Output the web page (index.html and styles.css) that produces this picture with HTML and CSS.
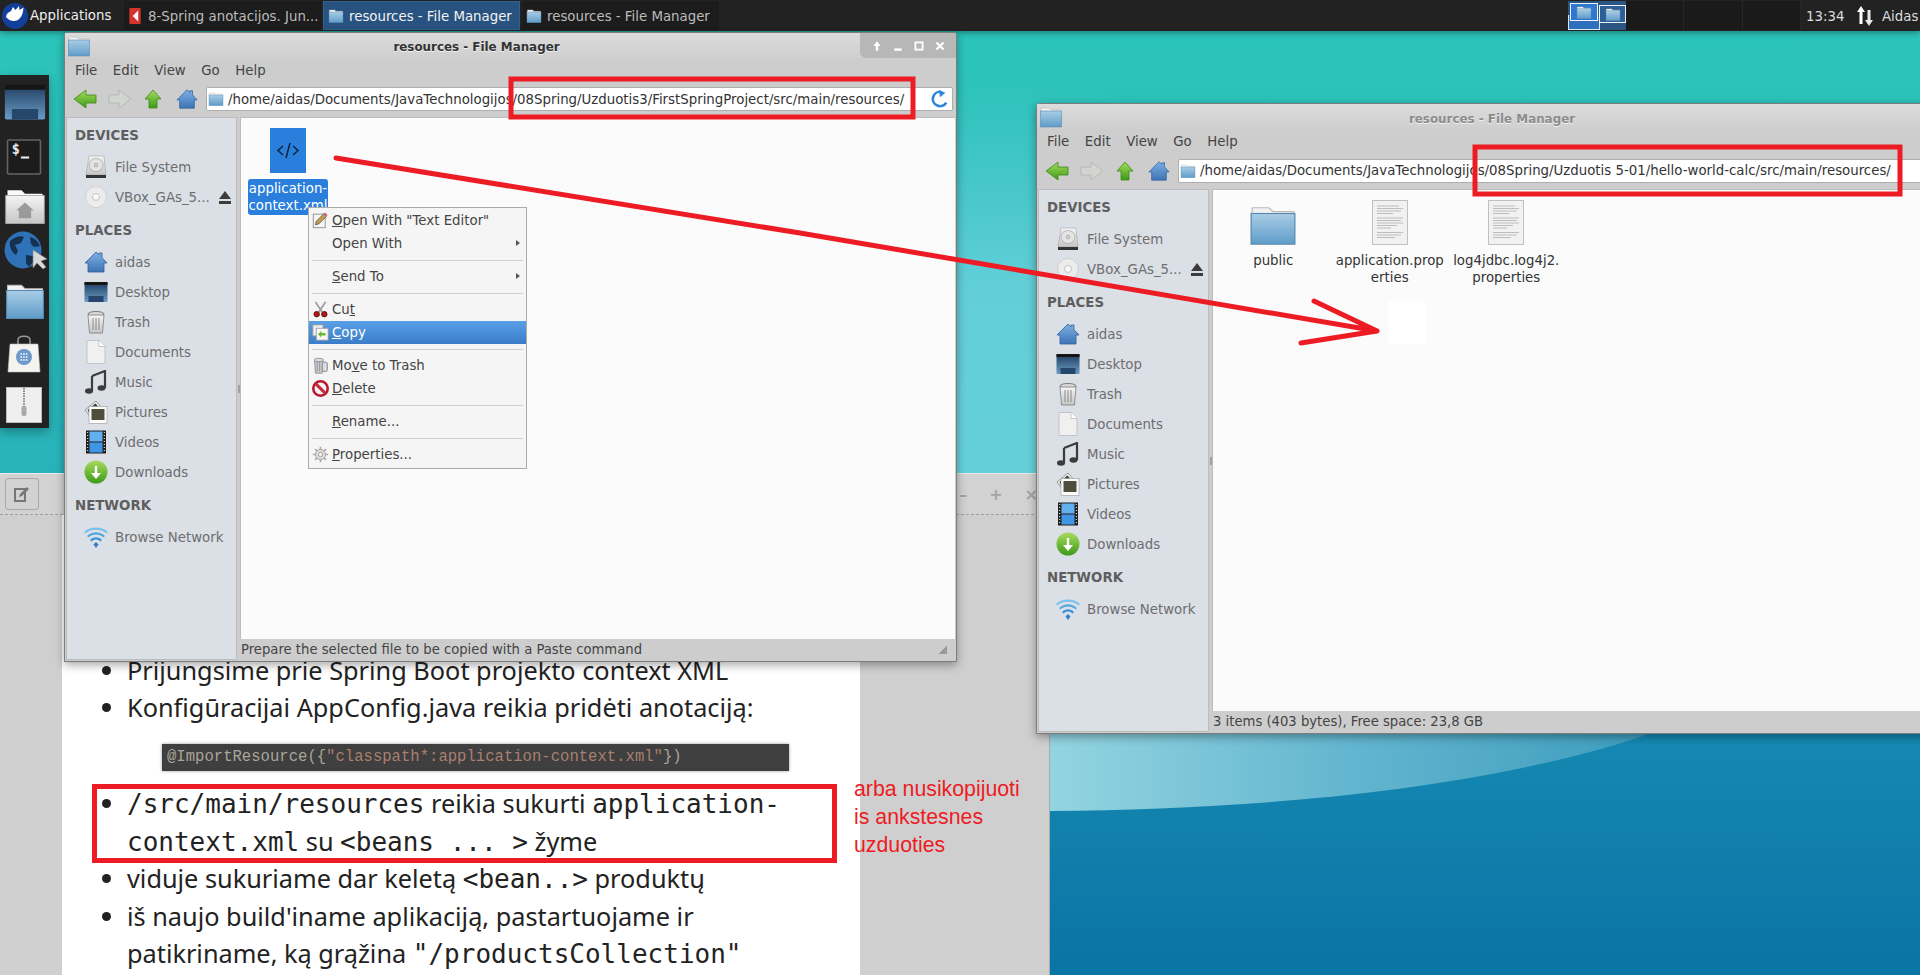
FILE: index.html
```html
<!DOCTYPE html>
<html lang="lt">
  <head>
    <meta charset="UTF-8" />
    <meta name="viewport" content="width=device-width, initial-scale=1.0" />
    <title>resources - File Manager</title>
    <link rel="stylesheet" href="styles.css">
  </head>
  <body>
    <!-- icon sprite -->
    <svg class="sprite" xmlns="http://www.w3.org/2000/svg">
      <defs>
        <linearGradient id="g-folder" x1="0" y1="0" x2="0" y2="1"><stop offset="0" stop-color="#a9cde6"/><stop offset="1" stop-color="#5f9cc9"/></linearGradient>
        <linearGradient id="g-grey" x1="0" y1="0" x2="0" y2="1"><stop offset="0" stop-color="#f4f4f4"/><stop offset="1" stop-color="#c6c6c6"/></linearGradient>
        <linearGradient id="g-house" x1="0" y1="0" x2="0" y2="1"><stop offset="0" stop-color="#7fb0e4"/><stop offset="1" stop-color="#3d74b5"/></linearGradient>
        <linearGradient id="g-green" x1="0" y1="0" x2="0" y2="1"><stop offset="0" stop-color="#a6dc5c"/><stop offset="1" stop-color="#3e9a1a"/></linearGradient>
        <linearGradient id="g-screen" x1="0" y1="0" x2="0" y2="1"><stop offset="0" stop-color="#1f3c5e"/><stop offset="1" stop-color="#6b9cc6"/></linearGradient>
      </defs>
      <symbol id="i-folder" viewBox="0 0 24 24" preserveAspectRatio="none">
        <path d="M2 3h8l2 2h10v4H2z" fill="#f2f2f2" stroke="#bbb" stroke-width=".6"/>
        <rect x="1.500" y="6" width="21" height="16" fill="url(#g-folder)" stroke="#5a8ab0" stroke-width=".6"/>
      </symbol>
      <symbol id="i-home-folder" viewBox="0 0 24 24">
        <path d="M2 3h8l2 2h10v4H2z" fill="#fafafa"/>
        <rect x="1" y="6" width="22" height="16" fill="url(#g-grey)" stroke="#aaa" stroke-width=".5"/>
        <path d="M12 10l5 4.500h-1.500V19h-7v-4.500H7z" fill="#9a9a9a"/>
      </symbol>
      <symbol id="i-home" viewBox="0 0 24 24">
        <path d="M12 2l3 2.800V3h3v4.600L23 13h-3v9H4v-9H1z" fill="url(#g-house)" stroke="#2e5f9e" stroke-width=".8"/>
      </symbol>
      <symbol id="i-hdd" viewBox="0 0 24 24">
        <path d="M5 1h15l2 19H2z" fill="url(#g-grey)" stroke="#999" stroke-width=".5"/>
        <ellipse cx="12" cy="10" rx="7" ry="6.500" fill="#e4e4e4" stroke="#aaa" stroke-width=".8"/>
        <circle cx="12" cy="10" r="2" fill="#ccc" stroke="#999" stroke-width=".5"/>
        <rect x="2" y="20" width="20" height="3" fill="#333"/>
      </symbol>
      <symbol id="i-disc" viewBox="0 0 24 24">
        <circle cx="12" cy="12" r="10.500" fill="#ececec" stroke="#d0d0d0"/>
        <circle cx="12" cy="12" r="3.500" fill="#f8f8f8" stroke="#c4c4c4"/>
      </symbol>
      <symbol id="i-desktop" viewBox="0 0 24 24">
        <rect x="0.500" y="2" width="23" height="20" rx="1" fill="url(#g-screen)"/>
        <rect x="0.500" y="2" width="23" height="3" fill="#151515"/>
        <rect x="4.500" y="16" width="15" height="6" fill="#24476b"/>
      </symbol>
      <symbol id="i-trash" viewBox="0 0 24 24">
        <ellipse cx="12" cy="4" rx="8" ry="2.500" fill="#d8d8d8" stroke="#7c7c7c"/>
        <path d="M4 5l1.500 18h13L20 5z" fill="url(#g-grey)" stroke="#7c7c7c" stroke-width=".8"/>
        <path d="M9 8v12M12 8v12M15 8v12" stroke="#8a8a8a" stroke-width="1"/>
      </symbol>
      <symbol id="i-doc" viewBox="0 0 24 24">
        <path d="M3 0.500h12l6 6V23.500H3z" fill="#f0f0f0" stroke="#b4b4b4" stroke-width=".7"/>
        <path d="M15 0.500v6h6" fill="#fff" stroke="#b4b4b4" stroke-width=".7"/>
      </symbol>
      <symbol id="i-music" viewBox="0 0 24 24">
        <path d="M8 6l13-5v17" fill="none" stroke="#3c3c3c" stroke-width="2.200"/>
        <path d="M8 6v15" stroke="#3c3c3c" stroke-width="2.200"/>
        <ellipse cx="5" cy="21" rx="4" ry="2.800" fill="#3c3c3c"/>
        <ellipse cx="17.500" cy="18" rx="4" ry="2.800" fill="#3c3c3c"/>
      </symbol>
      <symbol id="i-pictures" viewBox="0 0 24 24">
        <path d="M1 10l11-9 6 7-10 11z" fill="#eee" stroke="#777" stroke-width=".7"/>
        <path d="M3.500 10l8-6.500 3 3.500-8 9z" fill="#3c3c36"/>
        <rect x="5" y="6.500" width="18" height="17" fill="#fafafa" stroke="#999" stroke-width=".6"/>
        <rect x="7.500" y="9" width="13" height="11" fill="#4d4f3c"/>
      </symbol>
      <symbol id="i-video" viewBox="0 0 24 24">
        <rect x="2" y="0.500" width="20" height="23" fill="#222"/>
        <rect x="5.500" y="1.500" width="13" height="10" fill="#63b0f0"/>
        <rect x="5.500" y="12.500" width="13" height="10" fill="#3f96e6"/>
        <path d="M3.700 2v20M20.300 2v20" stroke="#fff" stroke-width="1" stroke-dasharray="1 2"/>
      </symbol>
      <symbol id="i-download" viewBox="0 0 24 24">
        <circle cx="12" cy="12" r="11.500" fill="url(#g-green)"/>
        <path d="M10.800 6h2.400v7H17l-5 6-5-6h3.800z" fill="#fff"/>
      </symbol>
      <symbol id="i-wifi" viewBox="0 0 24 24">
        <g fill="none" stroke-linecap="round" stroke-width="2.200">
          <path d="M1.500 7C7 2.500 17 2.500 22.500 7" stroke="#7cc0ee"/>
          <path d="M4.500 11c4.500-3.500 10.500-3.500 15 0" stroke="#4fa6e4"/>
          <path d="M7.500 15c3-2.200 6-2.200 9 0" stroke="#3a90d8"/>
        </g>
        <path d="M12 17l2.500 2.500L12 23l-2.500-3.500z" fill="#2f7fc9"/>
      </symbol>
      <symbol id="i-back" viewBox="0 0 24 20">
        <path d="M1 10L13 1v5h10v8H13v5z" fill="url(#g-green)" stroke="#3b8a16" stroke-width=".8"/>
      </symbol>
      <symbol id="i-forward" viewBox="0 0 24 20">
        <path d="M23 10L11 1v5H1v8h10v5z" fill="#d2d4d0" stroke="#b0b2ae" stroke-width=".8"/>
      </symbol>
      <symbol id="i-up" viewBox="0 0 20 20">
        <path d="M10 1l8 9h-4v9H6v-9H2z" fill="url(#g-green)" stroke="#3b8a16" stroke-width=".8"/>
      </symbol>
      <symbol id="i-reload" viewBox="0 0 20 20">
        <path d="M11 2a8 8 0 1 0 6 12" fill="none" stroke="#2f86d8" stroke-width="3"/>
        <path d="M9 0l7 3-6 5z" fill="#2f86d8"/>
      </symbol>
      <symbol id="i-text" viewBox="0 0 36 45">
        <rect x=".5" y=".5" width="35" height="44" fill="#f1f1f1" stroke="#c0c0c0"/>
        <path d="M5 6h22M5 8.500h26M5 11h24M5 13.500h16M5 18h26M5 20.500h24M5 23h26M5 25.500h20M5 28h14M5 32.500h26M5 35h24M5 37.500h18" stroke="#bdbdbd" stroke-width="1"/>
      </symbol>
      <symbol id="i-pencil" viewBox="0 0 20 20">
        <rect x="1.500" y="2.500" width="14" height="16" fill="#f7f7f7" stroke="#888"/>
        <path d="M4 15l1-4 9-9 3 3-9 9z" fill="#c9a04a" stroke="#3c3c3c" stroke-width=".8"/>
        <path d="M14 2l3 3 1.500-1.500-3-3z" fill="#d9679a"/>
      </symbol>
      <symbol id="i-cut" viewBox="0 0 20 20">
        <path d="M4 1l8 12M16 1L8 13" stroke="#9a9a9a" stroke-width="2"/>
        <circle cx="5.500" cy="15.500" r="3.200" fill="#b01818" stroke="#5a0c0c"/>
        <circle cx="14.500" cy="15.500" r="3.200" fill="#b01818" stroke="#5a0c0c"/>
      </symbol>
      <symbol id="i-copy" viewBox="0 0 20 20">
        <rect x="1" y="1" width="12" height="13" fill="#eee" stroke="#999"/>
        <rect x="5" y="5" width="14" height="14" fill="#f8f8f8" stroke="#999"/>
        <path d="M7 12l4-4v2.500h5v3h-5V16z" fill="#6cb83a"/>
      </symbol>
      <symbol id="i-move-trash" viewBox="0 0 20 20">
        <path d="M3 4h10l-1 15H4z" fill="#c8ced6" stroke="#777" stroke-width=".8"/>
        <path d="M6 6v11M9 6v11" stroke="#888"/>
        <rect x="12" y="6" width="6" height="11" rx="2" fill="#d8dde2" stroke="#777"/>
        <ellipse cx="8" cy="3.500" rx="5.500" ry="2" fill="#ddd" stroke="#777" stroke-width=".8"/>
      </symbol>
      <symbol id="i-delete" viewBox="0 0 20 20">
        <circle cx="10" cy="10" r="8.500" fill="#f4f4f4" stroke="#b8182c" stroke-width="3"/>
        <path d="M4.500 4.500l11 11" stroke="#c8283c" stroke-width="3.500"/>
      </symbol>
      <symbol id="i-gear" viewBox="0 0 20 20">
        <circle cx="10" cy="10" r="6" fill="#dcdcdc" stroke="#999"/>
        <circle cx="10" cy="10" r="2.500" fill="#f4f4f4" stroke="#999"/>
        <path d="M10 1v3M10 16v3M1 10h3M16 10h3M3.600 3.600l2.100 2.100M14.300 14.300l2.100 2.100M3.600 16.400l2.100-2.100M14.300 5.700l2.100-2.100" stroke="#aaa" stroke-width="2"/>
      </symbol>
      <symbol id="i-eject" viewBox="0 0 12 13">
        <path d="M6 0l6 8H0z" fill="#3c3c3c"/>
        <rect y="10" width="12" height="3" fill="#3c3c3c"/>
      </symbol>
    </svg>

    <!-- wallpaper -->
    <svg class="wallpaper" viewBox="0 0 1920 975">
      <defs>
        <linearGradient id="wall-teal" x1="0" y1="0" x2="0" y2="1"><stop offset="0" stop-color="#2cc6bb"/><stop offset="1" stop-color="#27afb9"/></linearGradient>
        <linearGradient id="wall-blue" x1="0" y1="0" x2="0" y2="1"><stop offset="0" stop-color="#1d97ba"/><stop offset="1" stop-color="#0a74a5"/></linearGradient>
        <linearGradient id="wall-wave" gradientUnits="userSpaceOnUse" x1="1050" y1="0" x2="1660" y2="0"><stop offset="0" stop-color="#93d4e0"/><stop offset="0.5" stop-color="#62b5cf"/><stop offset="1" stop-color="#3c9cbd"/></linearGradient>
        <radialGradient id="wall-glow" gradientUnits="userSpaceOnUse" cx="1000" cy="540" r="460"><stop offset="0" stop-color="#66d0da"/><stop offset="0.55" stop-color="#62cfd8"/><stop offset="1" stop-color="#62cfd8" stop-opacity="0"/></radialGradient>
      </defs>
      <rect width="1920" height="560" fill="url(#wall-teal)"/>
      <rect width="1920" height="560" fill="url(#wall-glow)"/>
      <rect y="560" width="1920" height="415" fill="url(#wall-blue)"/>
      <path d="M900 560H1920C1800 620 1700 715 1640 737C1480 790 1250 810 1050 811H900z" fill="url(#wall-wave)"/>
    </svg>

    <!-- top panel -->
    <header class="panel">
      <div class="panel-menu">
        <svg class="logo" viewBox="0 0 26 26">
          <circle cx="13" cy="13" r="13" fill="#123f9a"/>
          <path d="M4 14C4 11 7 9 9 8L11 4l2.500 3L17 3l.5 4 4-2.500C21 10 20 14 16 17c-4 2-9 1-12-3z" fill="#fff"/>
        </svg>
        Applications
      </div>
      <div class="task task-pdf">
        <svg class="task-icon" viewBox="0 0 16 20"><rect x="1" width="14" height="20" fill="#d8342e"/><path d="M12 3L5 10l7 7z" fill="#f4f4f4"/></svg>
        <span>8-Spring anotacijos. Jun...</span>
      </div>
      <div class="task task-active">
        <svg class="task-icon"><use href="#i-folder"/></svg>
        <span>resources - File Manager</span>
      </div>
      <div class="task">
        <svg class="task-icon"><use href="#i-folder"/></svg>
        <span>resources - File Manager</span>
      </div>
      <div class="panel-fill"></div>
      <div class="pager">
        <div class="workspace workspace-on">
          <div class="mini-base"></div>
          <div class="mini mini-one"><svg class="mini-icon"><use href="#i-folder"/></svg></div>
          <div class="mini mini-two"><svg class="mini-icon"><use href="#i-folder"/></svg></div>
        </div>
        <div class="workspace"></div>
        <div class="workspace"></div>
        <div class="workspace"></div>
      </div>
      <div class="clock">13:34</div>
      <svg class="net-icon" viewBox="0 0 20 22">
        <path d="M6 1l4 6H7.500v12h-3V7H2z" fill="#fff"/>
        <path d="M14 21l-4-6h2.500V5h3v10H18z" fill="#e8e8e8"/>
      </svg>
      <div class="user">Aidas</div>
    </header>

    <!-- dock -->
    <nav class="dock">
      <svg class="dock-icon dock-desktop"><use href="#i-desktop"/></svg>
      <svg class="dock-icon dock-term" viewBox="0 0 34 35">
        <rect x="1" y="1" width="32" height="33" rx="1" fill="#1c1c1c" stroke="#666" stroke-width="1.500"/>
        <text x="5" y="15" class="term-text">$</text>
        <rect x="14" y="17" width="8" height="2" fill="#eee"/>
      </svg>
      <svg class="dock-icon dock-home"><use href="#i-home-folder"/></svg>
      <svg class="dock-icon dock-globe" viewBox="0 0 44 40">
        <circle cx="19" cy="19" r="18.500" fill="#2f72b8"/>
        <path d="M6 10c5-4 10-6 14-4l-3 6-6 2 3 6-2 4c-4-2-7-8-6-14zM26 6c4 1 8 4 10 9l-6 1-3-3zM22 24l7 1 1 5-5 6-3-4z" fill="#16304f"/>
        <path d="M29 19l0 18 4-5 6 6 3-2-5-6 6-2z" fill="#d8d8d8" stroke="#888" stroke-width=".6"/>
      </svg>
      <svg class="dock-icon dock-folder"><use href="#i-folder"/></svg>
      <svg class="dock-icon dock-bag" viewBox="0 0 34 38">
        <path d="M11 10V5c0-5 12-5 12 0v5" fill="none" stroke="#999" stroke-width="1.500"/>
        <path d="M3 9h28l2 28H1z" fill="#f4f4f0" stroke="#bbb" stroke-width=".6"/>
        <circle cx="17" cy="22" r="8" fill="#6f99cc"/>
        <path d="M13.500 19h7M13.500 22h7M13.500 25h7" stroke="#fff" stroke-width="1.500" stroke-dasharray="1.500 1.200"/>
      </svg>
      <svg class="dock-icon dock-zip" viewBox="0 0 36 36">
        <rect x=".5" y=".5" width="35" height="35" fill="#efefef" stroke="#bbb"/>
        <path d="M18 1v19" stroke="#888" stroke-width="2" stroke-dasharray="1.500 1"/>
        <rect x="15.500" y="19" width="5" height="10" rx="2" fill="#aaa"/>
      </svg>
    </nav>

    <!-- slides app behind the file managers -->
    <section class="slides">
      <div class="slides-bar">
        <div class="edit-btn"><svg class="edit-icon" viewBox="0 0 20 20"><path d="M3 5h10v12H3z" fill="none" stroke="#777" stroke-width="2"/><path d="M7 13l1-3 7-7 2 2-7 7z" fill="#777"/></svg></div>
        <div class="win-marks"><span>–</span><span>+</span><span>×</span></div>
      </div>
      <div class="slides-body">
        <article class="page">
          <ul class="bullets">
            <li>Prijungsime prie Spring Boot projekto context XML</li>
            <li>Konfigūracijai AppConfig.java reikia pridėti anotaciją:</li>
          </ul>
          <div class="code"><span class="code-ann">@ImportResource</span>({<span class="code-str">"classpath*:application-context.xml"</span>})</div>
          <ul class="bullets">
            <li><code>/src/main/resources</code> reikia sukurti <code>application-context.xml</code> su <code>&lt;beans ... &gt;</code> žyme</li>
            <li>viduje sukuriame dar keletą <code>&lt;bean..&gt;</code> produktų</li>
            <li>iš naujo build'iname aplikaciją, pastartuojame ir patikriname, ką grąžina <code>"/productsCollection"</code></li>
          </ul>
        </article>
      </div>
    </section>

    <!-- left file manager -->
    <section class="window window-left">
      <div class="titlebar">
        <svg class="title-icon"><use href="#i-folder"/></svg>
        <div class="title">resources - File Manager</div>
        <div class="title-btns">
          <svg class="tb" viewBox="0 0 10 10"><path d="M5 1l3 4H6v4H4V5H2z" fill="#fff"/></svg>
          <svg class="tb" viewBox="0 0 10 10"><rect x="2" y="7" width="6" height="2" fill="#fff"/></svg>
          <svg class="tb" viewBox="0 0 10 10"><rect x="2" y="2" width="6" height="6" fill="none" stroke="#fff" stroke-width="1.500"/></svg>
          <svg class="tb" viewBox="0 0 10 10"><path d="M2 2l6 6M8 2l-6 6" stroke="#fff" stroke-width="1.800"/></svg>
        </div>
      </div>
      <div class="menubar"><span>File</span><span>Edit</span><span>View</span><span>Go</span><span>Help</span></div>
      <div class="toolbar">
        <svg class="tool tool-arrow"><use href="#i-back"/></svg>
        <svg class="tool tool-arrow"><use href="#i-forward"/></svg>
        <svg class="tool tool-up"><use href="#i-up"/></svg>
        <svg class="tool tool-house"><use href="#i-home"/></svg>
        <div class="location">
          <svg class="loc-icon"><use href="#i-folder"/></svg>
          <span class="loc-path">/home/aidas/Documents/JavaTechnologijos/08Spring/Uzduotis3/FirstSpringProject/src/main/resources/</span>
          <svg class="loc-reload"><use href="#i-reload"/></svg>
        </div>
      </div>
      <div class="panes">
        <aside class="sidebar">
          <h3>DEVICES</h3>
          <div class="side-row"><svg class="side-icon"><use href="#i-hdd"/></svg>File System</div>
          <div class="side-row"><svg class="side-icon"><use href="#i-disc"/></svg>VBox_GAs_5...<svg class="eject"><use href="#i-eject"/></svg></div>
          <h3>PLACES</h3>
          <div class="side-row"><svg class="side-icon"><use href="#i-home"/></svg>aidas</div>
          <div class="side-row"><svg class="side-icon"><use href="#i-desktop"/></svg>Desktop</div>
          <div class="side-row"><svg class="side-icon"><use href="#i-trash"/></svg>Trash</div>
          <div class="side-row"><svg class="side-icon"><use href="#i-doc"/></svg>Documents</div>
          <div class="side-row"><svg class="side-icon"><use href="#i-music"/></svg>Music</div>
          <div class="side-row"><svg class="side-icon"><use href="#i-pictures"/></svg>Pictures</div>
          <div class="side-row"><svg class="side-icon"><use href="#i-video"/></svg>Videos</div>
          <div class="side-row"><svg class="side-icon"><use href="#i-download"/></svg>Downloads</div>
          <h3>NETWORK</h3>
          <div class="side-row"><svg class="side-icon"><use href="#i-wifi"/></svg>Browse Network</div>
        </aside>
        <div class="splitter"><i></i></div>
        <div class="main-col">
          <div class="view">
            <div class="file file-xml">
              <svg class="file-icon" viewBox="0 0 36 45">
                <rect width="36" height="45" fill="#2a7fdc"/>
                <path d="M13 18l-5 4.500 5 4.500M23 18l5 4.500-5 4.500M20 15l-4 15" fill="none" stroke="#10233c" stroke-width="1.500"/>
              </svg>
              <div class="file-label selected">application-<br>context.xml</div>
            </div>
          </div>
          <div class="statusbar">Prepare the selected file to be copied with a Paste command<span class="grip"></span></div>
        </div>
      </div>
      <!-- context menu -->
      <div class="ctx">
        <div class="ctx-item"><svg class="ctx-icon"><use href="#i-pencil"/></svg><span><u>O</u>pen With "Text Editor"</span></div>
        <div class="ctx-item"><span>Open With</span><b class="caret"></b></div>
        <hr>
        <div class="ctx-item"><span><u>S</u>end To</span><b class="caret"></b></div>
        <hr>
        <div class="ctx-item"><svg class="ctx-icon"><use href="#i-cut"/></svg><span>Cu<u>t</u></span></div>
        <div class="ctx-item ctx-on"><svg class="ctx-icon"><use href="#i-copy"/></svg><span><u>C</u>opy</span></div>
        <hr>
        <div class="ctx-item"><svg class="ctx-icon"><use href="#i-move-trash"/></svg><span>Mo<u>v</u>e to Trash</span></div>
        <div class="ctx-item"><svg class="ctx-icon"><use href="#i-delete"/></svg><span><u>D</u>elete</span></div>
        <hr>
        <div class="ctx-item"><span><u>R</u>ename...</span></div>
        <hr>
        <div class="ctx-item"><svg class="ctx-icon"><use href="#i-gear"/></svg><span><u>P</u>roperties...</span></div>
      </div>
    </section>

    <!-- right file manager, runs off the screen -->
    <section class="window window-right">
      <div class="titlebar">
        <svg class="title-icon"><use href="#i-folder"/></svg>
        <div class="title">resources - File Manager</div>
        <div class="title-btns"></div>
      </div>
      <div class="menubar"><span>File</span><span>Edit</span><span>View</span><span>Go</span><span>Help</span></div>
      <div class="toolbar">
        <svg class="tool tool-arrow"><use href="#i-back"/></svg>
        <svg class="tool tool-arrow"><use href="#i-forward"/></svg>
        <svg class="tool tool-up"><use href="#i-up"/></svg>
        <svg class="tool tool-house"><use href="#i-home"/></svg>
        <div class="location">
          <svg class="loc-icon"><use href="#i-folder"/></svg>
          <span class="loc-path">/home/aidas/Documents/JavaTechnologijos/08Spring/Uzduotis 5-01/hello-world-calc/src/main/resources/</span>
        </div>
      </div>
      <div class="panes">
        <aside class="sidebar">
          <h3>DEVICES</h3>
          <div class="side-row"><svg class="side-icon"><use href="#i-hdd"/></svg>File System</div>
          <div class="side-row"><svg class="side-icon"><use href="#i-disc"/></svg>VBox_GAs_5...<svg class="eject"><use href="#i-eject"/></svg></div>
          <h3>PLACES</h3>
          <div class="side-row"><svg class="side-icon"><use href="#i-home"/></svg>aidas</div>
          <div class="side-row"><svg class="side-icon"><use href="#i-desktop"/></svg>Desktop</div>
          <div class="side-row"><svg class="side-icon"><use href="#i-trash"/></svg>Trash</div>
          <div class="side-row"><svg class="side-icon"><use href="#i-doc"/></svg>Documents</div>
          <div class="side-row"><svg class="side-icon"><use href="#i-music"/></svg>Music</div>
          <div class="side-row"><svg class="side-icon"><use href="#i-pictures"/></svg>Pictures</div>
          <div class="side-row"><svg class="side-icon"><use href="#i-video"/></svg>Videos</div>
          <div class="side-row"><svg class="side-icon"><use href="#i-download"/></svg>Downloads</div>
          <h3>NETWORK</h3>
          <div class="side-row"><svg class="side-icon"><use href="#i-wifi"/></svg>Browse Network</div>
        </aside>
        <div class="splitter"><i></i></div>
        <div class="main-col">
          <div class="view view-files">
            <div class="file"><svg class="file-icon folder-icon"><use href="#i-folder"/></svg><div class="file-label">public</div></div>
            <div class="file"><svg class="file-icon"><use href="#i-text"/></svg><div class="file-label">application.prop<br>erties</div></div>
            <div class="file"><svg class="file-icon"><use href="#i-text"/></svg><div class="file-label">log4jdbc.log4j2.<br>properties</div></div>
          </div>
          <div class="statusbar">3 items (403 bytes), Free space: 23,8 GB</div>
        </div>
      </div>
    </section>

    <!-- red annotations drawn over the screenshot -->
    <div class="note">arba nusikopijuoti<br>is ankstesnes<br>uzduoties</div>
    <div class="patch"></div>
    <svg class="marks" viewBox="0 0 1920 975">
      <rect x="511" y="79" width="402" height="38" />
      <rect x="1475" y="147" width="425" height="47" />
      <rect x="94.500" y="786.500" width="740" height="74" />
      <path class="stroke" d="M336 158L800 233L1377 331M1314 301L1377 331L1301 343" />
    </svg>
  </body>
</html>
```

FILE: styles.css
```css
* {
  box-sizing: border-box;
}
html,
body {
  margin: 0;
  height: 100%;
}
body {
  position: relative;
  width: 1920px;
  height: 975px;
  overflow: hidden;
  font-family: "DejaVu Sans", sans-serif;
  font-size: 13.33px;
  color: #4a4a4a;
}
.sprite {
  position: absolute;
  width: 0;
  height: 0;
}
.wallpaper {
  position: absolute;
  left: 0;
  top: 0;
  width: 1920px;
  height: 975px;
}

/* top panel */
.panel {
  position: absolute;
  left: 0;
  top: 0;
  width: 1920px;
  height: 31px;
  display: flex;
  align-items: center;
  background: #222;
  color: #ddd;
  box-shadow: 0 2px 6px rgba(0, 0, 0, 0.35);
}
.panel-menu {
  width: 124px;
  display: flex;
  align-items: center;
  gap: 2px;
  padding-left: 2px;
  color: #eee;
}
.logo {
  width: 26px;
  height: 26px;
}
.task {
  width: 197px;
  height: 29px;
  display: flex;
  align-items: center;
  gap: 5px;
  padding-left: 4px;
  margin-right: 2px;
  background: #1c1c1c;
  color: #bbb;
  white-space: nowrap;
}
.task span,
.clock,
.user {
  padding-top: 2px;
}
.task-active {
  background: #28527f;
  color: #f2f2f2;
  border: 1px solid #33608f;
}
.task-pdf {
  padding-left: 3px;
}
.task-icon {
  width: 16px;
  height: 16px;
  flex: none;
}
.panel-fill {
  flex: 1;
}
.pager {
  display: flex;
  width: 233px;
  height: 29px;
}
.workspace {
  flex: 1;
  position: relative;
  background: #1a1a1a;
  border-right: 1px solid #262626;
}
.workspace-on {
  background: #2a5580;
  border-right: 0;
}
.mini-base {
  position: absolute;
  left: 0;
  top: 14px;
  width: 32px;
  height: 15px;
  background: #2f6fbe;
  border: 1px solid #dfe8f2;
  border-top: 0;
}
.mini {
  position: absolute;
  display: flex;
  align-items: center;
  justify-content: center;
  border: 1px solid #eef2f7;
}
.mini-one {
  left: 2px;
  top: 2px;
  width: 28px;
  height: 18px;
  background: #2f78cf;
}
.mini-two {
  left: 31px;
  top: 4px;
  width: 27px;
  height: 18px;
  background: #2d5f96;
}
.mini-icon {
  width: 16px;
  height: 15px;
}
.clock {
  width: 53px;
  padding-left: 5px;
}
.net-icon {
  width: 20px;
  height: 24px;
  margin: 0 7px 0 1px;
}
.user {
  width: 38px;
  white-space: nowrap;
}

/* dock */
.dock {
  position: absolute;
  left: 0;
  top: 75px;
  width: 49px;
  height: 353px;
  background: #222;
  box-shadow: 0 4px 10px rgba(0, 0, 0, 0.3);
}
.dock-icon {
  position: absolute;
  left: 4px;
}
.dock-desktop {
  top: 6px;
  width: 42px;
  height: 42px;
}
.dock-term {
  top: 64px;
  left: 6px;
  width: 36px;
  height: 36px;
}
.term-text {
  fill: #eee;
  font-family: "DejaVu Sans Mono", monospace;
  font-size: 13px;
  font-weight: bold;
}
.dock-home {
  top: 110px;
  width: 42px;
  height: 42px;
}
.dock-globe {
  top: 156px;
  left: 4px;
  width: 44px;
  height: 40px;
}
.dock-folder {
  top: 205px;
  width: 42px;
  height: 42px;
}
.dock-bag {
  top: 260px;
  left: 7px;
  width: 34px;
  height: 38px;
}
.dock-zip {
  top: 312px;
  left: 6px;
  width: 36px;
  height: 36px;
}

/* slides app */
.slides {
  position: absolute;
  left: 0;
  top: 473px;
  width: 1050px;
  height: 502px;
  background: #cfcfcf;
  display: flex;
  flex-direction: column;
  border-top: 1px solid #ececec;
  border-right: 1px solid #aaa;
}
.slides-bar {
  height: 41px;
  flex: none;
  display: flex;
  justify-content: space-between;
  align-items: center;
  padding-left: 5px;
  background: #d2d2d2;
  border-bottom: 1px dashed #9c9c9c;
}
.edit-btn {
  width: 34px;
  height: 32px;
  display: flex;
  align-items: center;
  justify-content: center;
  border: 1px solid #a8a8a8;
  border-radius: 3px;
}
.edit-icon {
  width: 20px;
  height: 20px;
}
.win-marks {
  display: flex;
  gap: 22px;
  padding-right: 11px;
  color: #a4a4a4;
  font-size: 16px;
  font-weight: bold;
}
.slides-body {
  flex: 1;
  padding-left: 62px;
  overflow: hidden;
}
.page {
  width: 798px;
  height: 100%;
  background: #fff;
  padding-top: 137px;
  font-family: "Noto Sans", sans-serif;
  font-size: 25.300px;
  line-height: 37px;
  color: #222;
}
.bullets {
  margin: 0;
  padding: 0 20px 0 65px;
}
.code + .bullets {
  line-height: 37.500px;
}
.page code {
  font-family: "DejaVu Sans Mono", monospace;
  font-size: 26px;
  line-height: 1;
}
.code {
  width: 627px;
  height: 27px;
  margin: 18px 0 14px 100px;
  padding-left: 5px;
  background: #3f3f3f;
  box-shadow: 0 0 3px rgba(0, 0, 0, 0.4);
  font-family: "Liberation Mono", monospace;
  font-size: 15.600px;
  line-height: 27px;
  color: #a9a597;
  white-space: nowrap;
}
.code-ann {
  color: #a9a597;
}
.code-str {
  color: #a87f70;
}

/* file manager windows */
.window {
  position: absolute;
  display: flex;
  flex-direction: column;
  background: #cdcdcd;
  border: 1px solid #7c7c7c;
  border-radius: 4px 4px 0 0;
  box-shadow: 0 3px 10px rgba(0, 0, 0, 0.35);
}
.window-left {
  left: 64px;
  top: 32px;
  width: 893px;
  height: 630px;
}
.window-right {
  left: 1036px;
  top: 103px;
  width: 980px;
  height: 631px;
}
.titlebar {
  height: 25px;
  flex: none;
  display: flex;
  align-items: center;
  background: linear-gradient(#dcdcdc, #cfcfcf);
}
.title-icon {
  width: 24px;
  height: 24px;
  margin-left: 2px;
  flex: none;
}
.title {
  flex: 1;
  padding: 2px 0 0 2px;
  text-align: center;
  font-size: 11.900px;
  font-weight: bold;
  color: #333;
  text-shadow: 0 1px 0 #f2f2f2;
}
.window-right .title {
  padding-top: 4px;
  color: #8c8c8c;
}
.title-btns {
  width: 96px;
  height: 25px;
  flex: none;
  display: flex;
  align-items: center;
  justify-content: space-around;
  padding: 0 6px;
  background: #b7b7b7;
  border-radius: 0 0 0 6px;
}
.window-right .title-btns {
  background: none;
}
.tb {
  width: 12px;
  height: 12px;
}
.menubar {
  height: 24px;
  flex: none;
  display: flex;
  align-items: center;
  gap: 15.500px;
  padding-left: 10px;
  color: #444;
}
.window-right .menubar {
  height: 25px;
}
.toolbar {
  height: 34px;
  flex: none;
  display: flex;
  align-items: center;
  padding-left: 8px;
}
.window-right .toolbar {
  height: 33px;
}
.tool {
  flex: none;
}
.tool-arrow {
  width: 24px;
  height: 20px;
  margin-right: 11px;
}
.tool-up {
  width: 20px;
  height: 20px;
  margin-right: 13px;
}
.tool-house {
  width: 22px;
  height: 22px;
  margin-right: 8px;
}
.location {
  flex: 1;
  height: 24px;
  min-width: 0;
  display: flex;
  align-items: center;
  gap: 4px;
  padding-left: 1px;
  margin-right: 3px;
  background: #fff;
  border: 1px solid #aeaeae;
  border-radius: 2px;
  color: #333;
}
.loc-icon {
  width: 16px;
  height: 16px;
  flex: none;
}
.loc-path {
  flex: 1;
  white-space: nowrap;
}
.loc-reload {
  width: 18px;
  height: 18px;
  flex: none;
  margin-right: 3px;
}
.panes {
  flex: 1;
  min-height: 0;
  display: flex;
  padding: 1px 0 1px 1px;
}
.window-right .panes {
  padding-top: 2px;
}
.sidebar {
  width: 171px;
  flex: none;
  background: #dbdfe6;
  border: 1px solid #bcbcbc;
  padding: 4px 0 0 8px;
}
.sidebar h3 {
  margin: 0 0 4px;
  height: 26px;
  font-size: 13.330px;
  line-height: 28px;
  font-weight: bold;
  color: #5e5e5e;
}
.sidebar .side-row + h3 {
  margin-top: 5px;
}
.side-row {
  height: 30px;
  display: flex;
  align-items: center;
  gap: 7px;
  padding-left: 9px;
  color: #6e6e6e;
  white-space: nowrap;
}
.side-icon {
  width: 24px;
  height: 24px;
  flex: none;
}
.eject {
  width: 12px;
  height: 13px;
  margin-left: auto;
  margin-right: 5px;
  flex: none;
}
.splitter {
  width: 3px;
  flex: none;
  display: flex;
  align-items: center;
  justify-content: center;
}
.splitter i {
  width: 2px;
  height: 8px;
  background: #a0a0a0;
}
.main-col {
  flex: 1;
  min-width: 0;
  display: flex;
  flex-direction: column;
  padding-right: 1px;
}
.view {
  flex: 1;
  position: relative;
  background: #fbfbfb;
  border-top: 1px solid #bcbcbc;
  border-left: 1px solid #bcbcbc;
  color: #333;
}
.statusbar {
  height: 21px;
  flex: none;
  display: flex;
  align-items: center;
  justify-content: space-between;
  padding-left: 1px;
  font-size: 13.200px;
  color: #444;
}
.grip {
  width: 8px;
  height: 8px;
  margin-right: 8px;
  background: linear-gradient(135deg, transparent 50%, #999 50%);
}
.view-files {
  display: flex;
  padding: 10px 0 0 2px;
}
.file {
  width: 116.500px;
  display: flex;
  flex-direction: column;
  align-items: center;
  line-height: 17px;
  text-align: center;
  white-space: nowrap;
}
.file-icon {
  width: 36px;
  height: 45px;
  margin-bottom: 7px;
}
.folder-icon {
  width: 50px;
  height: 46px;
  margin-top: 2px;
  margin-bottom: 4px;
}
.file-xml {
  position: absolute;
  left: 7px;
  top: 10px;
  width: 80px;
}
.file-xml .file-icon {
  margin-bottom: 6px;
}
.selected {
  width: 80px;
  height: 36px;
  padding-top: 1px;
  background: #2a7fdc;
  border-radius: 3px;
  color: #fff;
}

/* context menu */
.ctx {
  position: absolute;
  left: 243px;
  top: 174px;
  width: 219px;
  height: 262px;
  padding: 1px 0;
  background: #f5f5f5;
  border: 1px solid #ababab;
  color: #444;
}
.ctx hr {
  height: 1px;
  margin: 4.500px 3px;
  border: 0;
  background: #d0d0d0;
}
.ctx-item {
  position: relative;
  height: 23px;
  display: flex;
  align-items: center;
  padding-left: 23px;
}
.ctx-icon {
  position: absolute;
  left: 3px;
  top: 3px;
  width: 17px;
  height: 17px;
}
.ctx-on {
  background: linear-gradient(#5a9fe6, #3a7cc9);
  color: #fff;
}
.caret {
  position: absolute;
  right: 6px;
  top: 8px;
  border-left: 4px solid #555;
  border-top: 3px solid transparent;
  border-bottom: 3px solid transparent;
}

/* red annotations */
.note {
  position: absolute;
  left: 854px;
  top: 775px;
  font-family: "Liberation Sans", Arial, sans-serif;
  font-size: 21.300px;
  line-height: 28px;
  color: #ed1c24;
}
.patch {
  position: absolute;
  left: 1388px;
  top: 301px;
  width: 38px;
  height: 43px;
  background: #fff;
}
.marks {
  position: absolute;
  left: 0;
  top: 0;
  width: 1920px;
  height: 975px;
  pointer-events: none;
}
.marks rect {
  fill: none;
  stroke: #ed1c24;
  stroke-width: 5;
}
.marks .stroke {
  fill: none;
  stroke: #ed1c24;
  stroke-width: 5;
  stroke-linecap: round;
  stroke-linejoin: round;
}
```
